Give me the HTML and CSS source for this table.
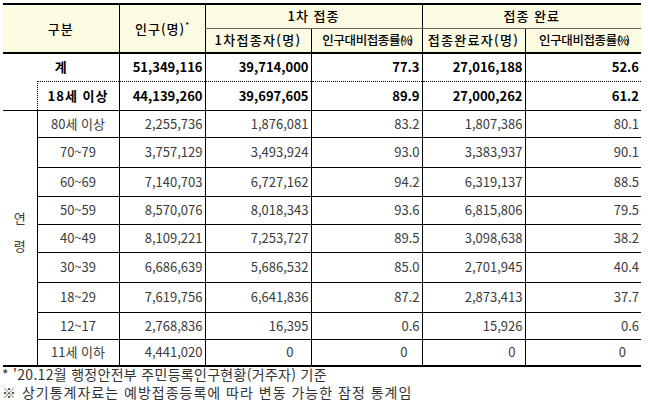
FILE: index.html
```html
<!DOCTYPE html>
<html lang="ko">
<head>
<meta charset="utf-8">
<link rel="stylesheet" href="styles.css">
</head>
<body>
<table class="stats">
  <colgroup>
    <col class="c0"><col class="c1"><col class="c2"><col class="c3"><col class="c4"><col class="c5"><col class="c6">
  </colgroup>
  <thead>
    <tr class="h1">
      <th colspan="2" rowspan="2" class="nl">구분</th>
      <th rowspan="2">인구(명)<sup>*</sup></th>
      <th colspan="2" class="grp">1차 접종</th>
      <th colspan="2" class="grp">접종 완료</th>
    </tr>
    <tr class="h2">
      <th class="wide">1차접종자(명)</th>
      <th class="cond">인구대비접종률<span class="pct">(%)</span></th>
      <th class="wide">접종완료자(명)</th>
      <th class="cond">인구대비접종률<span class="pct">(%)</span></th>
    </tr>
  </thead>
  <tbody>
    <tr class="total">
      <td colspan="2" class="nl lbl">계</td>
      <td>51,349,116</td><td>39,714,000</td><td>77.3</td><td>27,016,188</td><td>52.6</td>
    </tr>
    <tr class="adult">
      <td class="nl blank"></td>
      <td class="lbl dl">18세 이상</td>
      <td>44,139,260</td><td>39,697,605</td><td>89.9</td><td>27,000,262</td><td>61.2</td>
    </tr>
    <tr class="age r27">
      <td rowspan="9" class="nl group"><span>연</span><span>령</span></td>
      <td class="lbl">80세 이상</td>
      <td>2,255,736</td><td>1,876,081</td><td>83.2</td><td>1,807,386</td><td>80.1</td>
    </tr>
    <tr class="age r30">
      <td class="lbl">70~79</td>
      <td>3,757,129</td><td>3,493,924</td><td>93.0</td><td>3,383,937</td><td>90.1</td>
    </tr>
    <tr class="age r29">
      <td class="lbl">60~69</td>
      <td>7,140,703</td><td>6,727,162</td><td>94.2</td><td>6,319,137</td><td>88.5</td>
    </tr>
    <tr class="age r28">
      <td class="lbl">50~59</td>
      <td>8,570,076</td><td>8,018,343</td><td>93.6</td><td>6,815,806</td><td>79.5</td>
    </tr>
    <tr class="age r28">
      <td class="lbl">40~49</td>
      <td>8,109,221</td><td>7,253,727</td><td>89.5</td><td>3,098,638</td><td>38.2</td>
    </tr>
    <tr class="age r30">
      <td class="lbl">30~39</td>
      <td>6,686,639</td><td>5,686,532</td><td>85.0</td><td>2,701,945</td><td>40.4</td>
    </tr>
    <tr class="age r30">
      <td class="lbl">18~29</td>
      <td>7,619,756</td><td>6,641,836</td><td>87.2</td><td>2,873,413</td><td>37.7</td>
    </tr>
    <tr class="age r27">
      <td class="lbl">12~17</td>
      <td>2,768,836</td><td>16,395</td><td>0.6</td><td>15,926</td><td>0.6</td>
    </tr>
    <tr class="age r27 last">
      <td class="lbl">11세 이하</td>
      <td>4,441,020</td><td class="z3">0</td><td class="z4">0</td><td class="z5">0</td><td class="z6">0</td>
    </tr>
  </tbody>
</table>
<div class="notes">
  <p class="n1">* '20.12월 행정안전부 주민등록인구현황(거주자) 기준</p>
  <p class="n2">※ 상기통계자료는 예방접종등록에 따라 변동 가능한 잠정 통계임</p>
</div>
</body>
</html>
```
FILE: styles.css
```css
html, body {
  margin: 0;
  padding: 0;
  background: #ffffff;
}

body {
  font-family: "Noto Sans CJK KR", "Noto Sans", sans-serif;
  font-size: 13px;
  color: #000;
}

.stats {
  border-collapse: collapse;
  table-layout: fixed;
  width: 638px;
  margin: 3px 0 0 3px;
  line-height: 16px;
}

.c0 { width: 34px; }
.c1 { width: 82px; }
.c2 { width: 86px; }
.c3 { width: 106px; }
.c4 { width: 111px; }
.c5 { width: 103px; }
.c6 { width: 116px; }

.stats th,
.stats td {
  padding: 0 2px 0 0;
  border: 0;
  border-left: 1px solid #000;
  vertical-align: middle;
  white-space: nowrap;
  overflow: visible;
}

.stats .nl {
  border-left: 0;
}

/* header */
.stats thead th {
  background: #fefbe3;
  font-weight: 500;
  text-align: center;
  padding: 0;
  letter-spacing: 1px;
}

.h1 { height: 24px; }
.h2 { height: 25px; }

.h1 th {
  border-top: 2px solid #000;
}

.h1 th.grp {
  border-bottom: 1px solid #666;
}

.h1 th[rowspan],
.h2 th {
  border-bottom: 2px solid #000;
}

.stats sup {
  font-size: 8px;
  vertical-align: 6px;
  line-height: 0;
  letter-spacing: 0;
}

.stats thead th.wide {
  letter-spacing: 1.3px;
}

.stats thead th.cond {
  font-size: 12.5px;
  letter-spacing: -0.4px;
}

.pct {
  letter-spacing: -2.5px;
  font-size: 11px;
}

/* body */
.stats tbody td {
  text-align: right;
}

.stats tbody td.lbl {
  text-align: center;
  padding: 0;
}

.total { height: 28px; }
.adult { height: 29px; }

.total td,
.adult td {
  font-weight: bold;
}

.adult td.lbl {
  letter-spacing: 1px;
}

.adult td {
  border-top: 1px dotted #000;
  border-bottom: 1px solid #000;
}

.adult td.blank {
  border-top: 0;
}

.adult td.dl {
  border-left: 1px dotted #000;
}

.age td {
  border-top: 1px solid #000;
  color: #3a3a3a;
}

.age.last td,
.age td.group {
  border-bottom: 2px solid #000;
}

.r27 { height: 27px; }
.r28 { height: 28px; }
.r29 { height: 29px; }
.r30 { height: 30px; }

.stats td.z3 { padding-right: 17px; }
.stats td.z4 { padding-right: 14px; }
.stats td.z5 { padding-right: 9px; }
.stats td.z6 { padding-right: 15px; }

.stats td.group {
  text-align: center;
  padding: 0 0 12px 0;
}

.group span {
  display: block;
  line-height: 28px;
}

/* notes */
.notes {
  margin: -2px 0 0 2px;
  color: #333;
  font-size: 14px;
  line-height: 18px;
}

.notes p {
  margin: 0;
}

.notes .n1 {
  letter-spacing: 0.3px;
}

.notes .n2 {
  letter-spacing: 1px;
}
```
